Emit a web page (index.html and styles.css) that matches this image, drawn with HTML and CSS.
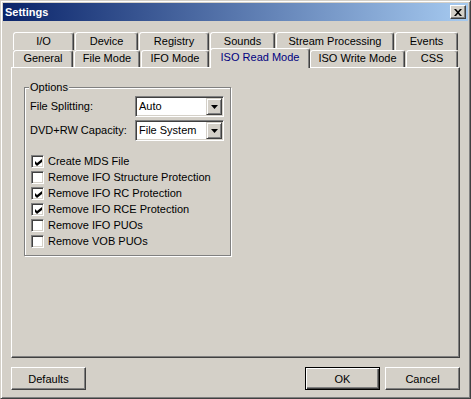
FILE: index.html
```html
<!DOCTYPE html>
<html lang="en">
  <head>
    <link rel="stylesheet" href="styles.css">
  </head>
  <body>
    <div class="window">
      <div class="titlebar">
        <span class="title">Settings</span>
        <button class="close-btn">
          <svg width="8" height="7" viewBox="0 0 8 7">
            <path d="M0 0h2l2 2.2L6 0h2L5 3.5 8 7H6L4 4.8 2 7H0l3-3.5z" fill="#000"/>
          </svg>
        </button>
      </div>

      <div class="dialog">
        <div class="tabs">
          <div class="tab-row">
            <div class="tab t-io">I/O</div>
            <div class="tab t-device">Device</div>
            <div class="tab t-registry">Registry</div>
            <div class="tab t-sounds">Sounds</div>
            <div class="tab t-stream">Stream Processing</div>
            <div class="tab t-events">Events</div>
          </div>
          <div class="tab-row front">
            <div class="tab t-general">General</div>
            <div class="tab t-filemode">File Mode</div>
            <div class="tab t-ifo">IFO Mode</div>
            <div class="tab t-isoread selected">ISO Read Mode</div>
            <div class="tab t-isowrite">ISO Write Mode</div>
            <div class="tab t-css">CSS</div>
          </div>
        </div>

        <div class="panel">
          <div class="group">
            <div class="group-title">Options</div>

            <div class="field-row">
              <span class="field-label">File Splitting:</span>
              <div class="combo">
                <span class="combo-value">Auto</span>
                <span class="combo-btn">
                  <svg width="7" height="4" viewBox="0 0 7 4"><path d="M0 0h7L3.5 4z" fill="#000"/></svg>
                </span>
              </div>
            </div>
            <div class="field-row">
              <span class="field-label">DVD+RW Capacity:</span>
              <div class="combo">
                <span class="combo-value">File System</span>
                <span class="combo-btn">
                  <svg width="7" height="4" viewBox="0 0 7 4"><path d="M0 0h7L3.5 4z" fill="#000"/></svg>
                </span>
              </div>
            </div>

            <div class="checks">
              <label class="check">
                <span class="box"><svg class="mark" width="7" height="7" viewBox="0 0 7 7"><path d="M0 2l2 2 5-4v3L2 7 0 5z" fill="#000"/></svg></span>
                Create MDS File
              </label>
              <label class="check">
                <span class="box"></span>
                Remove IFO Structure Protection
              </label>
              <label class="check">
                <span class="box"><svg class="mark" width="7" height="7" viewBox="0 0 7 7"><path d="M0 2l2 2 5-4v3L2 7 0 5z" fill="#000"/></svg></span>
                Remove IFO RC Protection
              </label>
              <label class="check">
                <span class="box"><svg class="mark" width="7" height="7" viewBox="0 0 7 7"><path d="M0 2l2 2 5-4v3L2 7 0 5z" fill="#000"/></svg></span>
                Remove IFO RCE Protection
              </label>
              <label class="check">
                <span class="box"></span>
                Remove IFO PUOs
              </label>
              <label class="check">
                <span class="box"></span>
                Remove VOB PUOs
              </label>
            </div>
          </div>
        </div>

        <div class="footer">
          <button class="btn">Defaults</button>
          <div class="spacer"></div>
          <button class="btn default">OK</button>
          <button class="btn">Cancel</button>
        </div>
      </div>
    </div>
  </body>
</html>
```

FILE: styles.css
```css
/* Classic dialog look */
body {
  margin: 0;
  background: #d4d0c8;
  font-family: 'Liberation Sans', Arial, sans-serif;
  font-size: 11px;
  color: #000;
}

.window {
  box-sizing: border-box;
  width: 471px;
  height: 399px;
  padding: 2px;
  border: 1px solid;
  border-color: #d4d0c8 #404040 #404040 #d4d0c8;
  box-shadow: inset 1px 1px #fff, inset -1px -1px #808080;
  display: flex;
  flex-direction: column;
}

.titlebar {
  height: 18px;
  display: flex;
  align-items: center;
  background: linear-gradient(to right, #0a246a, #a6caf0);
  padding-left: 2px;
}

.title {
  flex: 1;
  color: #fff;
  font-weight: bold;
  line-height: 18px;
}

.close-btn {
  box-sizing: border-box;
  width: 16px;
  height: 14px;
  margin-right: 2px;
  padding: 0;
  border: 1px solid;
  border-color: #fff #404040 #404040 #fff;
  box-shadow: inset -1px -1px #808080;
  background: #d4d0c8;
  display: flex;
  align-items: center;
  justify-content: center;
}

.dialog {
  flex: 1;
  display: flex;
  flex-direction: column;
  padding: 11px 8px 6px 8px;
}

/* Tabs */
.tabs {
  padding-left: 2px;
}

.tab-row {
  display: flex;
  height: 18px;
}

.tab-row.front {
  height: 17px;
  align-items: flex-end;
}

.tab {
  box-sizing: border-box;
  height: 18px;
  margin-right: 1px;
  border: 1px solid;
  border-bottom: none;
  border-color: #fff #404040 transparent #fff;
  border-radius: 3px 3px 0 0;
  box-shadow: inset -1px 0 #808080;
  background: #d4d0c8;
  text-align: center;
  line-height: 16px;
  white-space: nowrap;
}

.front .tab {
  height: 17px;
  line-height: 15px;
}

.front .tab.selected {
  position: relative;
  z-index: 1;
  height: 20px;
  line-height: 16px;
  margin-bottom: -1px;
  color: #000080;
}

.t-io { width: 61px; }
.t-device { width: 63px; }
.t-registry { width: 70px; }
.t-sounds { width: 65px; }
.t-stream { width: 118px; }
.t-events { width: 63px; }

.t-general { width: 60px; }
.t-filemode { width: 66px; }
.t-ifo { width: 68px; }
.t-isoread { width: 100px; margin-right: 0; }
.t-isowrite { width: 95px; }
.t-css { width: 52px; }

/* Tab page */
.panel {
  flex: 1;
  border: 1px solid;
  border-color: #fff #404040 #404040 #fff;
  box-shadow: inset -1px -1px #808080;
  padding: 19px 0 0 12px;
}

.group {
  box-sizing: border-box;
  width: 207px;
  height: 169px;
  border: 1px solid #808080;
  box-shadow: inset 1px 1px #fff, 1px 1px #fff;
  padding: 0 5px;
}

.group-title {
  width: fit-content;
  margin: -7px 0 0 -1px;
  padding: 0 1px;
  line-height: 13px;
  background: #d4d0c8;
}

.field-row {
  display: flex;
  align-items: center;
  margin-top: 2px;
}

.field-row + .field-row {
  margin-top: 3px;
}

.field-label {
  width: 105px;
  line-height: 13px;
}

.combo {
  box-sizing: border-box;
  width: 89px;
  height: 21px;
  padding: 1px;
  border: 1px solid;
  border-color: #808080 #fff #fff #808080;
  box-shadow: inset 1px 1px #404040, inset -1px -1px #d4d0c8;
  background: #fff;
  display: flex;
}

.combo-value {
  flex: 1;
  padding-left: 2px;
  line-height: 17px;
}

.combo-btn {
  box-sizing: border-box;
  width: 16px;
  height: 17px;
  border: 1px solid;
  border-color: #d4d0c8 #404040 #404040 #d4d0c8;
  box-shadow: inset 1px 1px #fff, inset -1px -1px #808080;
  background: #d4d0c8;
  display: flex;
  align-items: center;
  justify-content: center;
}

/* Checkboxes */
.checks {
  margin-top: 12px;
}

.check {
  display: flex;
  align-items: center;
  height: 16px;
  line-height: 16px;
}

.box {
  box-sizing: border-box;
  width: 13px;
  height: 13px;
  margin: 0 4px 0 1px;
  padding: 2px;
  border: 1px solid;
  border-color: #808080 #fff #fff #808080;
  box-shadow: inset 1px 1px #404040, inset -1px -1px #d4d0c8;
  background: #fff;
}

.mark {
  display: block;
  margin: 1px 0 0 1px;
}

/* Buttons */
.footer {
  display: flex;
  gap: 5px;
  margin-top: 9px;
}

.spacer {
  flex: 1;
}

.btn {
  box-sizing: border-box;
  width: 75px;
  height: 23px;
  padding: 0;
  border: 1px solid;
  border-color: #fff #404040 #404040 #fff;
  box-shadow: inset -1px -1px #808080;
  background: #d4d0c8;
  font-family: 'Liberation Sans', Arial, sans-serif;
  font-size: 11px;
  color: #000;
}

.btn.default {
  border-color: #000;
  box-shadow: inset 1px 1px #fff, inset -1px -1px #404040, inset -2px -2px #808080;
}
```
